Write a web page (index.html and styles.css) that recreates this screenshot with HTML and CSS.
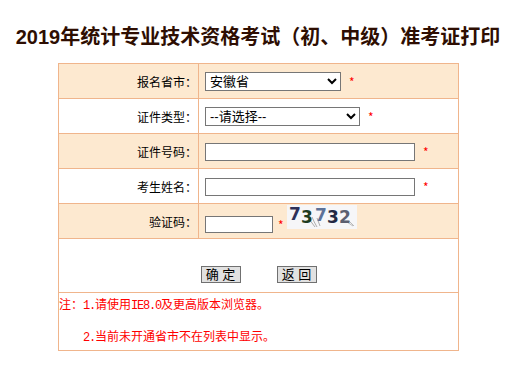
FILE: index.html
```html
<!DOCTYPE html>
<html lang="zh-CN">
<head>
    <meta charset="utf-8">
    <title>准考证打印</title>
    <link rel="stylesheet" href="styles.css">
</head>
<body>
<div class="page">
    <h1 class="title">2019年统计专业技术资格考试（初、中级）准考证打印</h1>
    <table class="form-table">
        <tr class="tint">
            <td class="label">报名省市：</td>
            <td class="field"><select class="sel-prov"><option>安徽省</option></select><span class="star">*</span></td>
        </tr>
        <tr>
            <td class="label">证件类型：</td>
            <td class="field"><select class="sel-type"><option>--请选择--</option></select><span class="star">*</span></td>
        </tr>
        <tr class="tint">
            <td class="label">证件号码：</td>
            <td class="field"><input class="txt" type="text"><span class="star">*</span></td>
        </tr>
        <tr>
            <td class="label">考生姓名：</td>
            <td class="field"><input class="txt" type="text"><span class="star">*</span></td>
        </tr>
        <tr class="tint">
            <td class="label">验证码：</td>
            <td class="field">
                <div class="cap-wrap">
                    <input class="cap-input" type="text"><span class="star">*</span>
                    <svg class="cap-img" width="70" height="24" viewBox="0 0 70 24">
                        <rect width="70" height="24" fill="#f6f6f8"/>
                        <path d="M22 14 q3 4 6 8 M25 12 q2 5 5 10 M30 13 l3 8" stroke="#9a9a9a" stroke-width="0.8" fill="none"/>
                        <path d="M60 17 l6 4 M62 16 l5 5" stroke="#aaaaaa" stroke-width="0.8" fill="none"/>
                        <text x="2" y="15" fill="#2e3158" font-size="17" font-weight="bold" font-family="DejaVu Sans">7</text>
                        <text x="14" y="18" fill="#1d3b1f" font-size="17" font-weight="bold" font-family="DejaVu Sans">3</text>
                        <text x="28" y="16" fill="#5d7298" font-size="17" font-weight="bold" font-family="DejaVu Sans">7</text>
                        <text x="40" y="18" fill="#222843" font-size="17" font-weight="bold" font-family="DejaVu Sans">3</text>
                        <text x="52" y="18" fill="#5b5f70" font-size="17" font-weight="bold" font-family="DejaVu Sans">2</text>
                    </svg>
                </div>
            </td>
        </tr>
        <tr>
            <td class="actions" colspan="2">
                <div class="btns">
                    <button class="btn" type="button">确 定</button>
                    <button class="btn" type="button">返 回</button>
                </div>
            </td>
        </tr>
        <tr>
            <td class="notes" colspan="2">
                <div class="note">注：<span class="en">1.</span>请使用<span class="en">IE8.0</span>及更高版本浏览器。</div>
                <div class="note second"><span class="en">2.</span>当前未开通省市不在列表中显示。</div>
            </td>
        </tr>
    </table>
</div>
</body>
</html>
```
FILE: styles.css
```css
body{
    margin: 0;
    font-family: "Noto Sans CJK SC", sans-serif;
    font-size: 12px;
    color: #000;
    background-color: white;
    text-spacing-trim: space-all;
}
.page{
    width: 516px;
}
.title{
    margin: 24px 0 0;
    text-align: center;
    font-family: "Liberation Sans", "Noto Sans CJK SC", sans-serif;
    font-size: 20px;
    font-weight: bold;
    line-height: 26px;
    color: #2e0e02;
}
.form-table{
    margin: 13px 0 0 58px;
    width: 401px;
    border-collapse: collapse;
}
.form-table td{
    border: 1px solid #f0b58c;
    height: 34px;
    padding: 0;
}
.tint td{
    background-color: #fde9d0;
}
.label{
    width: 138px;
    text-align: right;
    padding-right: 1px !important;
}
.field{
    padding-left: 6px !important;
}
select{
    height: 19px;
    border: 1px solid #767676;
    border-radius: 0;
    background-color: white;
    font-family: "Liberation Sans", "Noto Sans CJK SC", sans-serif;
    font-size: 13px;
    padding: 0;
    vertical-align: middle;
    color: #000;
}
.sel-prov{
    width: 136px;
}
.sel-type{
    width: 155px;
}
.txt{
    width: 210px;
    height: 18px;
    box-sizing: border-box;
    border: 1px solid #767676;
    padding: 0 2px;
    vertical-align: middle;
}
.star{
    color: red;
    font-size: 12px;
    margin-left: 8px;
    vertical-align: middle;
}
.cap-wrap{
    display: flex;
    align-items: center;
}
.cap-input{
    width: 68px;
    height: 17px;
    box-sizing: border-box;
    border: 1px solid #767676;
    margin-top: 6px;
}
.cap-wrap .star{
    margin-left: 5px;
    margin-top: 6px;
}
.cap-img{
    display: block;
    margin-left: 3px;
    margin-bottom: 9px;
}
.actions{
    height: 53px !important;
    vertical-align: top;
}
.btns{
    display: flex;
    justify-content: center;
    gap: 36px;
    padding-top: 27px;
}
.btn{
    width: 40px;
    height: 17px;
    padding: 0;
    background-color: #e1e1e1;
    border: 1px solid #707070;
    border-radius: 0;
    font-family: "Liberation Sans", "Noto Sans CJK SC", sans-serif;
    font-size: 13px;
    line-height: 15px;
    color: #000;
}
.notes{
    height: auto !important;
    color: red;
    padding-bottom: 1px !important;
}
.note{
    line-height: 22px;
}
.en{
    font-family: "Liberation Mono", monospace;
    font-size: 12px;
    letter-spacing: -1.2px;
}
.second{
    margin-top: 8px;
    padding-left: 24px;
}
```
